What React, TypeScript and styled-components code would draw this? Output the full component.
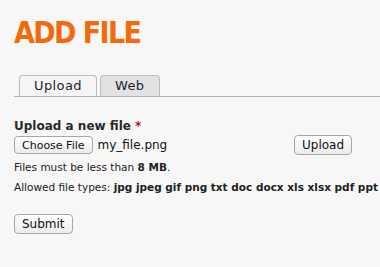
import React from 'react';
import styled, { createGlobalStyle } from 'styled-components';

const GlobalStyle = createGlobalStyle`
  html, body {
    margin: 0;
    padding: 0;
    background: #f7f7f7;
    overflow: hidden;
  }
  body {
    font-family: "DejaVu Sans", "Liberation Sans", sans-serif;
    color: #222;
  }
`;

const Page = styled.div`
  padding: 18px 0 0 14px;
  width: 380px;
  height: 267px;
  box-sizing: border-box;
`;

const Title = styled.h1`
  margin: 0;
  font-family: "DejaVu Sans Condensed", "Liberation Sans", sans-serif;
  font-weight: bold;
  font-size: 30px;
  line-height: 30px;
  color: #f46a0a;
  letter-spacing: -1.6px;
`;

const TabBar = styled.div`
  display: flex;
  gap: 3px;
  margin-top: 27px;
  padding-left: 5px;
  border-bottom: 1px solid #b4b4b4;
`;

const Tab = styled.div<{ $active?: boolean }>`
  height: 20px;
  padding: 0 14px;
  border: 1px solid #bdbdbd;
  border-bottom: none;
  border-radius: 4px 4px 0 0;
  background: ${(p) => (p.$active ? '#f5f5f5' : '#e2e2e2')};
  font-size: 13px;
  line-height: 20px;
  letter-spacing: 0.4px;
  color: #1d2333;
`;

const Form = styled.form`
  padding-top: 21px;
`;

const Label = styled.div`
  font-size: 12px;
  font-weight: bold;
  line-height: 16px;
  color: #2a2a2a;
`;

const Required = styled.span`
  color: #d01010;
`;

const FileRow = styled.div`
  display: grid;
  grid-template-columns: 280px auto;
  justify-items: start;
  align-items: center;
  height: 20px;
  margin-top: 1px;
`;

const FilePicker = styled.div`
  display: flex;
  align-items: center;
  gap: 5px;
`;

const Button = styled.button<{ $small?: boolean }>`
  box-sizing: border-box;
  height: ${(p) => (p.$small ? '18px' : '20px')};
  padding: 0 7px;
  border: 1px solid #a6a6a6;
  border-radius: 4px;
  background: linear-gradient(#ffffff, #ececec);
  font-family: "DejaVu Sans", "Liberation Sans", sans-serif;
  font-size: ${(p) => (p.$small ? '11px' : '12px')};
  line-height: 1;
  color: #111;
`;

const FileName = styled.span`
  font-size: 12px;
  color: #111;
`;

const Hint = styled.div`
  font-size: 10.5px;
  line-height: 20px;
  white-space: nowrap;
  color: #222;
  &:first-of-type {
    margin-top: 2px;
  }
`;

const Submit = styled(Button)`
  display: block;
  margin-top: 17px;
`;

export default function App() {
  return (
    <Page>
      <GlobalStyle />
      <Title>ADD FILE</Title>
      <TabBar>
        <Tab $active>Upload</Tab>
        <Tab>Web</Tab>
      </TabBar>
      <Form onSubmit={(e) => e.preventDefault()}>
        <Label>
          Upload a new file <Required>*</Required>
        </Label>
        <FileRow>
          <FilePicker>
            <Button type="button" $small>
              Choose File
            </Button>
            <FileName>my_file.png</FileName>
          </FilePicker>
          <Button type="button">Upload</Button>
        </FileRow>
        <div>
          <Hint>
            Files must be less than <b>8 MB</b>.
          </Hint>
          <Hint>
            Allowed file types: <b>jpg jpeg gif png txt doc docx xls xlsx pdf ppt pps odt ods odp</b>
          </Hint>
        </div>
        <Submit type="submit">Submit</Submit>
      </Form>
    </Page>
  );
}
